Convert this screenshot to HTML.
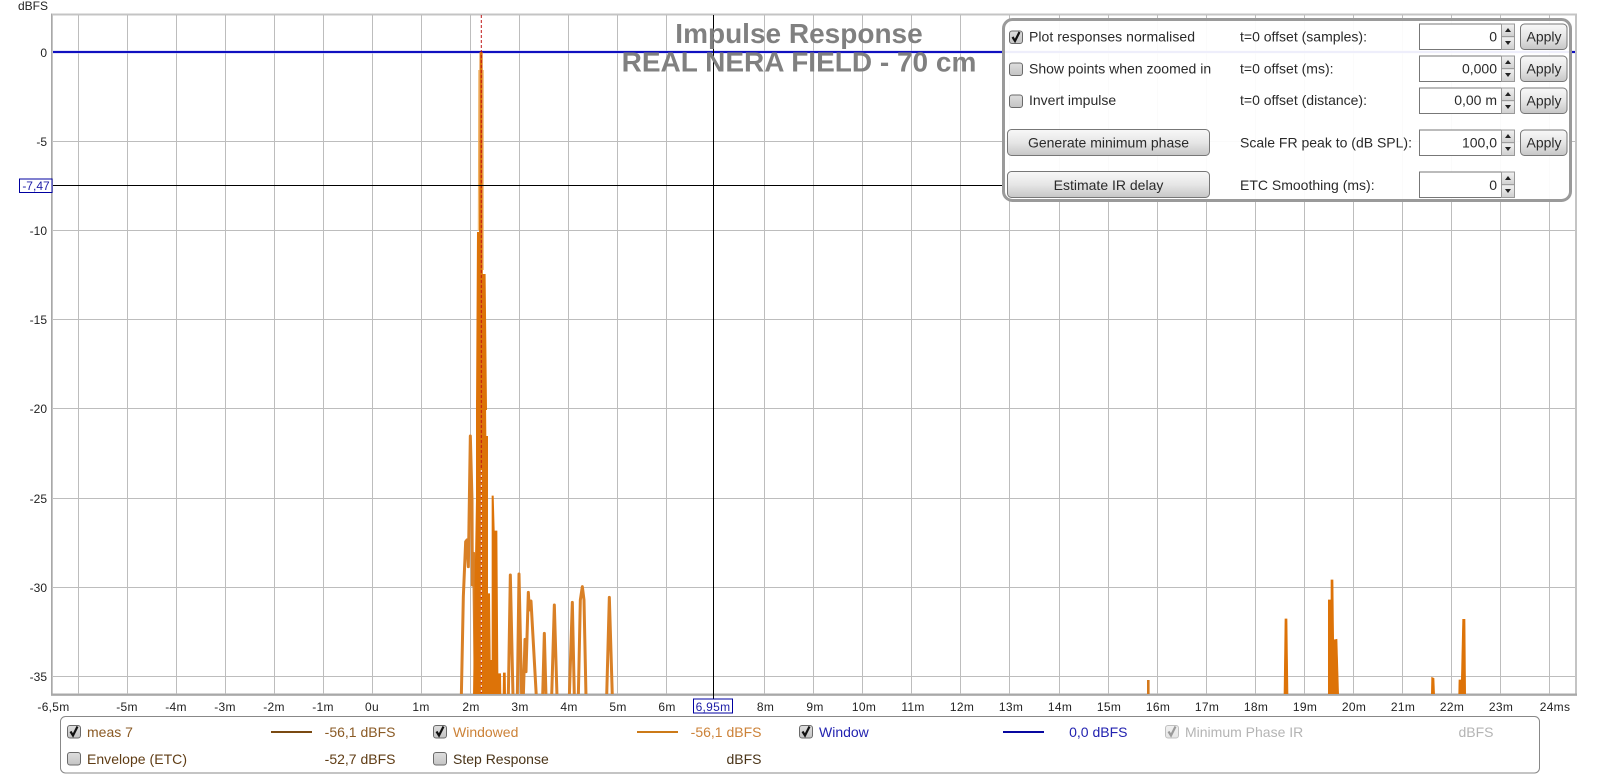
<!DOCTYPE html>
<html><head><meta charset="utf-8"><style>
html,body{margin:0;padding:0;background:#fff;width:1600px;height:775px;overflow:hidden}
svg{display:block;position:absolute;left:0;top:0}
text{font-family:"Liberation Sans",Arial,sans-serif}
.a{font-size:12px;fill:#222;text-anchor:middle;letter-spacing:.3px}
.y{font-size:12px;fill:#222;text-anchor:end}
.p{font-size:14px;fill:#2a2a2a}
.pe{font-size:14px;fill:#2a2a2a;text-anchor:end}
.bt{font-size:14px;fill:#2a2a2a;text-anchor:middle}
.l{font-size:14px}
.le{font-size:14px;text-anchor:end}
.t{font-size:28px;font-weight:bold;fill:#808080;text-anchor:middle}
</style></head><body>
<svg width="1600" height="775" viewBox="0 0 1600 775" xmlns="http://www.w3.org/2000/svg">
<defs>
<linearGradient id="bg" x1="0" y1="0" x2="0" y2="1"><stop offset="0" stop-color="#f8f8f8"/><stop offset=".5" stop-color="#e6e6e6"/><stop offset="1" stop-color="#c6c6c6"/></linearGradient>
<linearGradient id="cg" x1="0" y1="0" x2="0" y2="1"><stop offset="0" stop-color="#dedede"/><stop offset="1" stop-color="#c4c4c4"/></linearGradient>
<linearGradient id="sh" x1="0" y1="0" x2="0" y2="1"><stop offset="0" stop-color="#f2f2f2"/><stop offset="1" stop-color="#cfcfcf"/></linearGradient>
<g id="cb"><rect x=".5" y=".5" width="13" height="12.5" rx="2.5" fill="url(#cg)" stroke="#6a6a6a"/></g>
<g id="ck"><use href="#cb"/><path d="M3.5 6.5 L6 10.5 L10.5 1.5" fill="none" stroke="#111" stroke-width="2.2"/></g>
<g id="sp"><rect x=".5" y=".5" width="95" height="25.5" fill="#fff" stroke="#777"/><rect x="82.5" y=".5" width="13" height="12.7" fill="url(#sh)" stroke="#999"/><rect x="82.5" y="13.2" width="13" height="12.8" fill="url(#sh)" stroke="#999"/><path d="M86 8.5h6l-3-4z M86 17.5h6l-3 4z" fill="#222"/></g>
<g id="ap"><rect x=".5" y=".5" width="46.5" height="25.5" rx="4" fill="url(#bg)" stroke="#777"/><text x="24" y="18" class="bt">Apply</text></g>
<clipPath id="pl"><rect x="53" y="15" width="1522" height="679"/></clipPath>
</defs>

<!-- plot frame -->
<rect x="51" y="13.5" width="1526" height="682.5" fill="#c4c4c4"/>
<rect x="53" y="15.5" width="1522" height="678.5" fill="#fff"/>
<rect x="51" y="13.5" width="1" height="682" fill="#a8a8a8"/>
<rect x="52" y="693.5" width="1525" height="2" fill="#a8a8a8"/>

<!-- grid -->
<path fill="none" stroke="#bdbdbd" stroke-width="1" d="M78.5 15V694M127.5 15V694M176.5 15V694M225.5 15V694M274.5 15V694M323.5 15V694M372.5 15V694M421.5 15V694M470.5 15V694M519.5 15V694M568.5 15V694M617.5 15V694M666.5 15V694M764.5 15V694M813.5 15V694M862.5 15V694M911.5 15V694M960.5 15V694M1009.5 15V694M1059.5 15V694M1108.5 15V694M1157.5 15V694M1206.5 15V694M1255.5 15V694M1304.5 15V694M1353.5 15V694M1402.5 15V694M1451.5 15V694M1500.5 15V694M1549.5 15V694M53 141.5H1575M53 230.5H1575M53 319.5H1575M53 408.5H1575M53 498.5H1575M53 587.5H1575M53 676.5H1575"/>

<!-- window line -->
<rect x="53" y="50.5" width="1522" height="3" fill="#c9c9f2"/>
<rect x="53" y="51" width="1522" height="2" fill="#1010c0"/>

<!-- traces -->
<g clip-path="url(#pl)">
<g transform="translate(420,400) scale(.33333)">
<path fill="none" stroke="#d98026" stroke-width="9" stroke-linejoin="round" d="M124 890L130 590L137 425L141 420L145 500L151 108L156 300L157 555L161 460L166 890M265 890L271 525L279 890M292 890L297 522L305 890M310 890L315 718L318 815L325 577L328 630L333 603L349 890M368 890L373 700L378 890M395 890L403 615L411 890M448 890L457 607L463 890M475 890L481 600L487 560L492 600L498 890M560 890L568 592L577 890"/>
<path fill="#dd7308" d="M159 890L163 600L168 300L168 0L198 0L199 108L204 108L204 580L210 580L212 780L215 780L215 287L221 287L224 392L232 392L235 820L243 820L244 890Z"/>
<path fill="#dd7308" d="M248 890L249 818L257 818L258 890Z"/>
</g>
<path fill="#dd7308" d="M477 232L479 232L479.6 52L482.6 52L482.8 274L485.6 274L487 410L476 410Z"/>
<path fill="none" stroke="#f0b060" stroke-width="1" d="M478.8 70L478.3 230M483.2 70L483.2 270"/>
<!-- right hand spikes -->
<g transform="translate(1230,550) scale(.33333)">
<path fill="#dd7308" stroke="#dd7308" stroke-width="2" d="M162 436L165 207L171 207L174 436ZM295 436L295 150L303 150L303 90L309 90L311 270L321 268L326 436ZM604 436L605 382L612 385L614 436ZM686 436L687 390L694 390L698 208L705 208L707 436Z"/>
</g>
<rect x="1147" y="680" width="2.6" height="15" fill="#d4781a"/>
</g>

<!-- marker -->
<path d="M481.3 15V694" stroke="#c01818" stroke-width="1" stroke-dasharray="3 2" fill="none"/>
<path d="M481.3 470V694" stroke="#fff" stroke-width="1" stroke-dasharray="2 3" fill="none"/>

<!-- cursors -->
<path d="M53 185.5H1002M713.5 15V699" stroke="#000" stroke-width="1" fill="none"/>

<!-- title -->
<text x="799" y="43" class="t">Impulse Response</text>
<text x="799" y="71.5" class="t">REAL NERA FIELD - 70 cm</text>

<!-- y labels -->
<text x="18" y="10" font-size="12" fill="#222">dBFS</text>
<text x="47" y="57" class="y">0</text>
<text x="47" y="146" class="y">-5</text>
<text x="47" y="235" class="y">-10</text>
<text x="47" y="324" class="y">-15</text>
<text x="47" y="413" class="y">-20</text>
<text x="47" y="503" class="y">-25</text>
<text x="47" y="592" class="y">-30</text>
<text x="47" y="681" class="y">-35</text>
<rect x="19.5" y="179" width="32.5" height="13.5" fill="#fff" stroke="#0000a0"/>
<text x="36" y="190" font-size="12" fill="#2020a8" text-anchor="middle">-7,47</text>

<!-- x labels -->
<text x="53.5" y="711" class="a">-6,5m</text>
<text x="127" y="711" class="a">-5m</text>
<text x="176" y="711" class="a">-4m</text>
<text x="225" y="711" class="a">-3m</text>
<text x="274" y="711" class="a">-2m</text>
<text x="323" y="711" class="a">-1m</text>
<text x="372" y="711" class="a">0u</text>
<text x="421" y="711" class="a">1m</text>
<text x="471" y="711" class="a">2m</text>
<text x="520" y="711" class="a">3m</text>
<text x="569" y="711" class="a">4m</text>
<text x="618" y="711" class="a">5m</text>
<text x="667" y="711" class="a">6m</text>
<rect x="693.5" y="699" width="39" height="14" fill="#fff" stroke="#0000a0"/>
<text x="713" y="711" class="a" style="fill:#2020a8">6,95m</text>
<text x="765.5" y="711" class="a">8m</text>
<text x="815" y="711" class="a">9m</text>
<text x="864" y="711" class="a">10m</text>
<text x="913" y="711" class="a">11m</text>
<text x="962" y="711" class="a">12m</text>
<text x="1011" y="711" class="a">13m</text>
<text x="1060" y="711" class="a">14m</text>
<text x="1109" y="711" class="a">15m</text>
<text x="1158" y="711" class="a">16m</text>
<text x="1207" y="711" class="a">17m</text>
<text x="1256" y="711" class="a">18m</text>
<text x="1305" y="711" class="a">19m</text>
<text x="1354" y="711" class="a">20m</text>
<text x="1403" y="711" class="a">21m</text>
<text x="1452" y="711" class="a">22m</text>
<text x="1501" y="711" class="a">23m</text>
<text x="1555" y="711" class="a">24ms</text>

<!-- control panel -->
<rect x="1003.5" y="19.5" width="567" height="181" rx="9" fill="#fff" fill-opacity=".93" stroke="#9a9a9a" stroke-width="3"/>
<use href="#ck" x="1009" y="30.5"/>
<use href="#cb" x="1009" y="62.5"/>
<use href="#cb" x="1009" y="94.5"/>
<text x="1029" y="41.5" class="p" textLength="166">Plot responses normalised</text>
<text x="1029" y="73.5" class="p">Show points when zoomed in</text>
<text x="1029" y="105" class="p">Invert impulse</text>
<rect x="1007.5" y="129.5" width="202" height="26" rx="4" fill="url(#bg)" stroke="#777"/>
<text x="1108.5" y="147.5" class="bt">Generate minimum phase</text>
<rect x="1007.5" y="171.5" width="202" height="26" rx="4" fill="url(#bg)" stroke="#777"/>
<text x="1108.5" y="190" class="bt">Estimate IR delay</text>
<text x="1240" y="41.5" class="p">t=0 offset (samples):</text>
<text x="1240" y="73.5" class="p">t=0 offset (ms):</text>
<text x="1240" y="105" class="p">t=0 offset (distance):</text>
<text x="1240" y="147.5" class="p">Scale FR peak to (dB SPL):</text>
<text x="1240" y="190" class="p">ETC Smoothing (ms):</text>
<use href="#sp" x="1419" y="23.5"/>
<use href="#sp" x="1419" y="55.5"/>
<use href="#sp" x="1419" y="87.5"/>
<use href="#sp" x="1419" y="129.5"/>
<use href="#sp" x="1419" y="171.5"/>
<text x="1497" y="41.5" class="pe">0</text>
<text x="1497" y="73.5" class="pe">0,000</text>
<text x="1497" y="105" class="pe">0,00 m</text>
<text x="1497" y="147.5" class="pe">100,0</text>
<text x="1497" y="190" class="pe">0</text>
<use href="#ap" x="1520" y="23.5"/>
<use href="#ap" x="1520" y="55.5"/>
<use href="#ap" x="1520" y="87.5"/>
<use href="#ap" x="1520" y="129.5"/>

<!-- legend -->
<rect x="60.5" y="716.5" width="1479" height="56.5" rx="5" fill="#fff" stroke="#888"/>
<use href="#ck" x="67" y="725"/>
<text x="87" y="737" class="l" fill="#8a5a24">meas 7</text>
<rect x="271" y="731" width="41" height="2" fill="#7a4a12"/>
<text x="395.5" y="737" class="le" fill="#8a5a24">-56,1 dBFS</text>
<use href="#cb" x="67" y="752"/>
<text x="87" y="764" class="l" fill="#5f3c14" textLength="100">Envelope (ETC)</text>
<text x="395.5" y="764" class="le" fill="#5f3c14">-52,7 dBFS</text>
<use href="#ck" x="433" y="725"/>
<text x="453" y="737" class="l" fill="#cc8238">Windowed</text>
<rect x="637" y="731" width="41" height="2" fill="#cc7a18"/>
<text x="761.5" y="737" class="le" fill="#cc8238">-56,1 dBFS</text>
<use href="#cb" x="433" y="752"/>
<text x="453" y="764" class="l" fill="#4a3418">Step Response</text>
<text x="761.5" y="764" class="le" fill="#4a3418">dBFS</text>
<use href="#ck" x="799" y="725"/>
<text x="819" y="737" class="l" fill="#2222b0">Window</text>
<rect x="1003" y="731" width="41" height="2" fill="#0808a0"/>
<text x="1127.5" y="737" class="le" fill="#2222b0">0,0 dBFS</text>
<g opacity=".42"><use href="#ck" x="1165" y="725"/></g>
<text x="1185" y="737" class="l" fill="#b4b4b4">Minimum Phase IR</text>
<text x="1493.5" y="737" class="le" fill="#b4b4b4">dBFS</text>
</svg>
</body></html>
